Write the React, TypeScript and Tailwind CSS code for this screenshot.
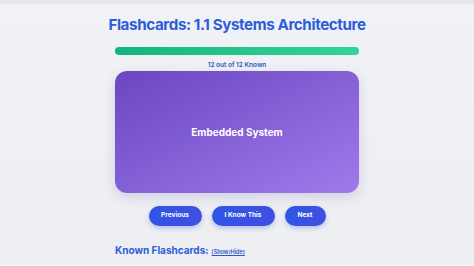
export default function App() {
  return (
    <div className="h-[266px] w-full overflow-hidden bg-[#f6f6f8] font-['Inter',sans-serif]">
      <div className="h-[4px] bg-[#e8e9ed]" />
      <div className="flex h-[258px] flex-col items-center bg-gradient-to-b from-[#f1f2f5] to-[#eceef2] shadow-[0_1px_4px_rgba(0,0,0,0.06)]">
        <h1 className="mt-[11px] text-[15.2px] font-bold leading-[20px] tracking-[-0.4px] text-[#2c5ddb]">
          Flashcards: 1.1 Systems Architecture
        </h1>
        <div className="mt-[12px] h-[8px] w-[244px] rounded-full bg-gradient-to-r from-[#12b57e] to-[#34d399]" />
        <p className="mt-[5px] text-[6.5px] font-semibold leading-[10px] text-[#2c55c8]">
          12 out of 12 Known
        </p>
        <div className="mt-[1px] flex h-[122px] w-[244px] items-center justify-center rounded-[12px] bg-gradient-to-br from-[#6b46c1] to-[#9f7aea] shadow-[0_4px_12px_rgba(80,60,160,0.18)]">
          <span className="text-[10px] font-bold text-white">Embedded System</span>
        </div>
        <div className="mt-[13px] flex gap-[10px]">
          <button className="h-[20px] w-[53px] rounded-full bg-gradient-to-r from-[#2f55e6] to-[#3f4fe0] text-[6.5px] font-bold text-white shadow-[0_2px_5px_rgba(50,80,220,0.3)]">
            Previous
          </button>
          <button className="h-[20px] w-[63px] rounded-full bg-gradient-to-r from-[#2f55e6] to-[#3f4fe0] text-[6.5px] font-bold text-white shadow-[0_2px_5px_rgba(50,80,220,0.3)]">
            I Know This
          </button>
          <button className="h-[20px] w-[41px] rounded-full bg-gradient-to-r from-[#2f55e6] to-[#3f4fe0] text-[6.5px] font-bold text-white shadow-[0_2px_5px_rgba(50,80,220,0.3)]">
            Next
          </button>
        </div>
        <div className="mt-[16px] flex w-[244px] items-baseline gap-[3px]">
          <h2 className="text-[10px] font-bold leading-[16px] text-[#2c5ddb]">Known Flashcards:</h2>
          <a className="text-[5.5px] font-semibold text-[#2c55c8] underline">[Show/Hide]</a>
        </div>
      </div>
    </div>
  );
}
